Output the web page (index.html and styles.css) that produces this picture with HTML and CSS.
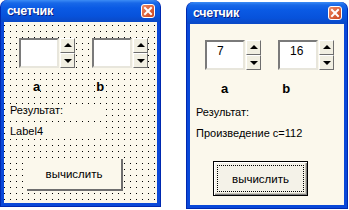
FILE: index.html
```html
<!DOCTYPE html>
<html>
<head>
<meta charset="utf-8">
<link rel="stylesheet" href="styles.css">
</head>
<body>
<div class="desk">
  <div class="win design">
    <div class="title">
      <span class="caption">счетчик</span>
      <svg class="close" width="14" height="14" viewBox="0 0 14 14"><defs><linearGradient id="cg1" x1="0" y1="0" x2="1" y2="1"><stop offset="0" stop-color="#F08A64"/><stop offset="1" stop-color="#C8401A"/></linearGradient></defs><rect x="0.5" y="0.5" width="13" height="13" rx="2.5" fill="url(#cg1)" stroke="#fff"/><path d="M4 4 L10 10 M10 4 L4 10" stroke="#fff" stroke-width="2" stroke-linecap="square"/></svg>
    </div>
    <div class="client">
      <div class="spins">
        <div class="spin"><div class="tb"></div><div class="sb"><div class="arr up"></div><div class="arr dn"></div></div></div>
        <div class="spin"><div class="tb"></div><div class="sb"><div class="arr up"></div><div class="arr dn"></div></div></div>
      </div>
      <div class="labels"><span class="la">a</span><span class="lb">b</span></div>
      <div class="lbl res">Результат:</div>
      <div class="lbl out">Label4</div>
      <div class="btnrow"><div class="cmd">вычислить</div></div>
    </div>
  </div>
  <div class="win run">
    <div class="title">
      <span class="caption">счетчик</span>
      <svg class="close" width="14" height="14" viewBox="0 0 14 14"><defs><linearGradient id="cg2" x1="0" y1="0" x2="1" y2="1"><stop offset="0" stop-color="#F08A64"/><stop offset="1" stop-color="#C8401A"/></linearGradient></defs><rect x="0.5" y="0.5" width="13" height="13" rx="2.5" fill="url(#cg2)" stroke="#fff"/><path d="M4 4 L10 10 M10 4 L4 10" stroke="#fff" stroke-width="2" stroke-linecap="square"/></svg>
    </div>
    <div class="client">
      <div class="spins">
        <div class="spin"><div class="tb">7</div><div class="sb"><div class="arr up"></div><div class="arr dn"></div></div></div>
        <div class="spin"><div class="tb">16</div><div class="sb"><div class="arr up"></div><div class="arr dn"></div></div></div>
      </div>
      <div class="labels"><span class="la">a</span><span class="lb">b</span></div>
      <div class="lbl res">Результат:</div>
      <div class="lbl out">Произведение с=112</div>
      <div class="btnrow"><div class="cmd"><span class="focus">вычислить</span></div></div>
    </div>
  </div>
</div>
</body>
</html>
```

FILE: styles.css
```css
html, body {
  margin: 0;
  padding: 0;
  background: #fff;
}
.desk {
  display: flex;
  align-items: flex-start;
  width: 349px;
  height: 210px;
  overflow: hidden;
  font-family: "Liberation Sans", Arial, sans-serif;
  font-size: 11px;
  color: #000;
}
.win {
  box-sizing: border-box;
  width: 161px;
  height: 207px;
  display: flex;
  flex-direction: column;
  background: #0A48D8;
  border-radius: 7px 7px 0 0;
  padding: 0 3px 3px 3px;
  border: 1px solid #0029B0;
  border-top: none;
}
.run {
  margin-left: 25px;
  margin-top: 2px;
  width: 162px;
}
.title {
  height: 22px;
  margin: 0 -3px;
  padding: 0 5px 0 6px;
  display: flex;
  align-items: center;
  justify-content: space-between;
  border-radius: 7px 7px 0 0;
  background: linear-gradient(#3C8CF5 0, #1868E8 3px, #0A5AE4 8px, #0752DB 16px, #0A4AC8 21px);
}
.caption {
  color: #fff;
  font-weight: bold;
  font-size: 12.5px;
  letter-spacing: -0.3px;
  text-shadow: 1px 1px 0 #0A1E80;
}
.close {
  display: block;
}
.client {
  flex: 1;
  background-color: #FBF8EC;
  padding: 16px 0 0 15px;
  display: flex;
  flex-direction: column;
}
.design .client {
  background-image: conic-gradient(at 1px 1px, transparent 75%, #000 0);
  background-size: 6px 6px;
  background-position: 0 3px;
}
.spins {
  display: flex;
  gap: 17px;
}
.spin {
  display: flex;
}
.tb {
  box-sizing: border-box;
  width: 40px;
  height: 30px;
  background: #fff;
  border-style: solid;
  border-width: 2px;
  border-color: #7A7A7A #E8E6DC #E8E6DC #7A7A7A;
  padding: 3px 0 0 10px;
  line-height: 13px;
  font-size: 12px;
}
.sb {
  width: 15px;
  height: 30px;
  display: flex;
  flex-direction: column;
  margin-left: 1px;
}
.arr {
  flex: 1;
  box-sizing: border-box;
  background: #F1EFE2;
  border-style: solid;
  border-width: 1px;
  border-color: #fff #6E6E6E #6E6E6E #fff;
  position: relative;
}
.arr::after {
  content: "";
  position: absolute;
  left: 3px;
  width: 0;
  height: 0;
  border-left: 4px solid transparent;
  border-right: 4px solid transparent;
}
.up::after {
  top: 4px;
  border-bottom: 4px solid #000;
}
.dn::after {
  top: 5px;
  border-top: 4px solid #000;
}
.labels {
  display: flex;
  margin-top: 12px;
  font-weight: bold;
  font-size: 13px;
  line-height: 14px;
}
.labels span {
  background: #FBF8EC;
}
.la { margin-left: 14px; }
.lb { margin-left: 56px; }
.run .la { margin-left: 16px; }
.run .lb { margin-left: 54px; }
.lbl {
  background: #FBF8EC;
  line-height: 13px;
  margin-left: -9px;
  align-self: flex-start;
}
.res {
  margin-top: 10px;
  padding-right: 38px;
}
.out {
  margin-top: 8px;
  padding-right: 62px;
}
.run .lbl { padding-right: 0; }
.btnrow {
  display: flex;
  margin-top: 21px;
  padding-left: 8px;
}
.cmd {
  box-sizing: border-box;
  width: 96px;
  height: 32px;
  display: flex;
  align-items: center;
  justify-content: center;
  background: #FBF8EC;
  border-right: 2px solid #6E6E6E;
  border-bottom: 2px solid #6E6E6E;
  font-size: 11.5px;
}
.run .btnrow {
  padding-left: 8px;
}
.run .cmd {
  width: 95px;
  height: 35px;
  border: 1px solid #000;
  box-shadow: inset 1px 1px 0 #fff, inset -1px -1px 0 #808080, inset -2px -2px 0 #C8C5B8;
  background: #F4F2E8;
  padding: 3px;
}
.focus {
  flex: 1;
  align-self: stretch;
  display: flex;
  align-items: center;
  justify-content: center;
  border: 1px dotted #000;
}
```
